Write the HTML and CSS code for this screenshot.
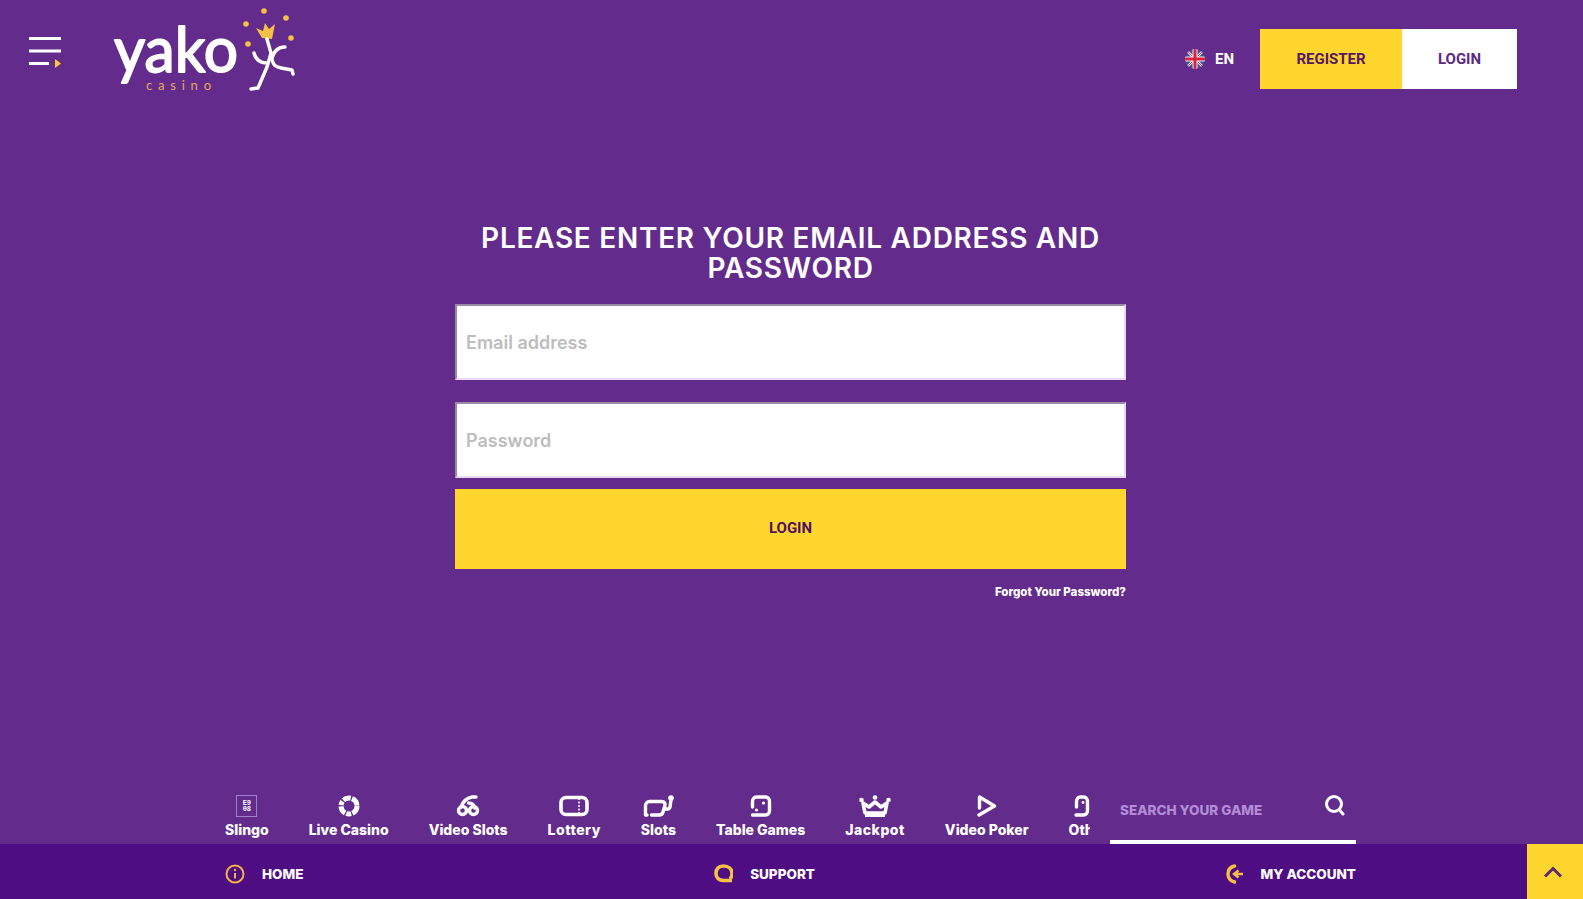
FILE: index.html
```html
<!DOCTYPE html>
<html lang="en">
<head>
<meta charset="utf-8">
<title>Yako Casino</title>
<link rel="stylesheet" href="styles.css">
</head>
<body>
<div class="page">
  <header class="header">
    <button class="burger" aria-label="Menu">
      <svg width="32" height="32" viewBox="0 0 32 32"><path d="M0 1.500h32M0 14h32M0 26.500h20" stroke="#fff" stroke-width="3" fill="none"/><path d="M26 22l6 4.500-6 4.500z" fill="#f7c93c"/></svg>
    </button>
    <a class="logo" href="#" aria-label="Yako Casino">
      <svg width="190" height="92" viewBox="110 5 190 92">
        <text class="logo-word" x="114" y="72" textLength="124" lengthAdjust="spacingAndGlyphs">yako</text>
        <text class="logo-sub" x="146" y="90" textLength="68">casino</text>
        <g fill="#f4c045">
          <circle cx="264" cy="11" r="2.800"/><circle cx="286" cy="18" r="2.800"/><circle cx="246" cy="24" r="2.800"/><circle cx="291" cy="38" r="2.800"/><circle cx="248" cy="44" r="2.800"/>
          <path d="M256 28l7 3 2-8 4 6 6-5-3 15-10-1z"/>
        </g>
        <path d="M267 39l4 14-4 14-9 21-7 1M254 53c2 8 8 10 13 10M285 47c-7 0-11 4-13 11 0 6 3 9 9 10l11 2 1 4" fill="none" stroke="#fff" stroke-width="3.400" stroke-linecap="round" stroke-linejoin="round"/>
      </svg>
    </a>
    <div class="account">
      <div class="lang">
        <svg class="flag" width="20" height="20" viewBox="0 0 20 20">
          <defs><clipPath id="flag-clip"><circle cx="10" cy="10" r="10"/></clipPath></defs>
          <g clip-path="url(#flag-clip)">
            <rect width="20" height="20" fill="#3f4f9e"/>
            <path d="M0 0l20 20M20 0L0 20" stroke="#d8d8e8" stroke-width="2.600"/>
            <path d="M0 0l20 20M20 0L0 20" stroke="#d9344a" stroke-width=".8"/>
            <path d="M10 0v20M0 10h20" stroke="#eee" stroke-width="5"/>
            <path d="M10 0v20M0 10h20" stroke="#d9233c" stroke-width="3"/>
          </g>
        </svg>
        <span>EN</span>
      </div>
      <a class="btn btn-register" href="#">REGISTER</a>
      <a class="btn btn-login" href="#">LOGIN</a>
    </div>
  </header>

  <main class="main">
    <form class="form">
      <h1 class="title">PLEASE ENTER YOUR EMAIL ADDRESS AND PASSWORD</h1>
      <input class="field" type="text" placeholder="Email address">
      <input class="field" type="password" placeholder="Password">
      <button class="submit" type="button">LOGIN</button>
      <a class="forgot" href="#">Forgot Your Password?</a>
    </form>
  </main>

  <div class="catbar">
    <nav class="cats">
      <a class="cat" href="#">
        <span class="slingo-icon"><span>E9</span><span>08</span></span>
        <span class="cat-label">Slingo</span>
      </a>
      <a class="cat" href="#">
        <svg class="cat-icon" width="24" height="22" viewBox="0 0 24 22"><circle cx="12" cy="11" r="8" fill="none" stroke="#fff" stroke-width="5" stroke-dasharray="9 1.300 5 1.300 8 1.300 4 1.300 8 1.300 9 1.300"/></svg>
        <span class="cat-label">Live Casino</span>
      </a>
      <a class="cat" href="#">
        <svg class="cat-icon" width="24" height="22" viewBox="0 0 24 22"><g fill="none" stroke="#fff" stroke-width="3.400" stroke-linecap="round"><circle cx="6.500" cy="15.500" r="4"/><circle cx="17.500" cy="15.500" r="4"/><path d="M5 12C7 6 11 3 16 2M12.500 8c3.500 0 5.500 2 6 5M16 2l4 0"/></g></svg>
        <span class="cat-label">Video Slots</span>
      </a>
      <a class="cat" href="#">
        <svg class="cat-icon" width="30" height="22" viewBox="0 0 30 22"><rect x="2" y="2.500" width="26" height="17" rx="5" fill="none" stroke="#fff" stroke-width="3.600"/><path d="M20 3v16" stroke="#fff" stroke-width="1.600" stroke-dasharray="2 1.500"/></svg>
        <span class="cat-label cat-label-loose">Lottery</span>
      </a>
      <a class="cat" href="#">
        <svg class="cat-icon" width="32" height="22" viewBox="0 0 32 22"><path d="M5 20H3.500V11c0-3 2-4.500 4-4.500h12c3 0 4 2 3.300 4.500l-1.800 6c-.5 2-2 3-4 3H9.500M23 14h3c1 0 1.500-.500 2-2l1-7" fill="none" stroke="#fff" stroke-width="3.400" stroke-linecap="round" stroke-linejoin="round"/><circle cx="29" cy="3" r="2.800" fill="#fff"/></svg>
        <span class="cat-label">Slots</span>
      </a>
      <a class="cat" href="#">
        <svg class="cat-icon" width="24" height="22" viewBox="0 0 24 22"><path d="M3.500 12V6.500c0-2.500 1.500-4.500 4-4.500h9c2.500 0 4 2 4 4.500v9c0 2.500-1.500 4.500-4 4.500H3.500" fill="none" stroke="#fff" stroke-width="3.400" stroke-linecap="round"/><circle cx="14.500" cy="8" r="1.600" fill="#fff"/><circle cx="7.500" cy="15" r="1.600" fill="#fff"/></svg>
        <span class="cat-label">Table Games</span>
      </a>
      <a class="cat" href="#">
        <svg class="cat-icon" width="32" height="22" viewBox="0 0 32 22"><path d="M4 8l2 10h20l2-10-6 4-6-5-6 5z" fill="none" stroke="#fff" stroke-width="3.600" stroke-linejoin="round"/><path d="M6 20.500h20" stroke="#fff" stroke-width="3"/><g fill="#fff"><circle cx="2.500" cy="5" r="2.300"/><circle cx="16" cy="2.500" r="2.300"/><circle cx="29.500" cy="5" r="2.300"/></g></svg>
        <span class="cat-label cat-label-loose">Jackpot</span>
      </a>
      <a class="cat" href="#">
        <svg class="cat-icon" width="22" height="22" viewBox="0 0 22 22"><path d="M3 20l15.500-9L3.500 2v11" fill="none" stroke="#fff" stroke-width="3.400" stroke-linecap="round" stroke-linejoin="round"/></svg>
        <span class="cat-label">Video Poker</span>
      </a>
      <a class="cat cat-other" href="#">
        <svg class="cat-icon" width="18" height="22" viewBox="0 0 18 22"><path d="M3.500 12V6.500c0-2.500 1.500-4.500 4-4.500h3c2.500 0 4 2 4 4.500v9c0 2.500-1.500 4.500-4 4.500H3" fill="none" stroke="#fff" stroke-width="3.400" stroke-linecap="round"/><circle cx="10" cy="7.500" r="1.400" fill="#fff"/></svg>
        <span class="cat-label">Other</span>
      </a>
    </nav>
    <div class="search">
      <input class="search-input" type="text" placeholder="SEARCH YOUR GAME">
      <svg class="search-icon" width="22" height="22" viewBox="0 0 22 22"><circle cx="10" cy="10" r="7.500" fill="none" stroke="#fff" stroke-width="3"/><path d="M15.500 16l3.500 4" stroke="#fff" stroke-width="3" stroke-linecap="round"/></svg>
    </div>
  </div>

  <footer class="botnav">
    <div class="botnav-links">
      <a class="botlink" href="#">
        <svg width="20" height="20" viewBox="0 0 20 20"><circle cx="10" cy="10" r="8.500" fill="none" stroke="#f4b24a" stroke-width="2"/><path d="M10 9v5.500" stroke="#f4b24a" stroke-width="2"/><circle cx="10" cy="6" r="1.200" fill="#f4b24a"/></svg>
        <span>HOME</span>
      </a>
      <a class="botlink" href="#">
        <svg width="19" height="20" viewBox="0 0 19 20"><path d="M16 15c1.500-1.500 2-3.500 2-5.500C18 5 14.500 2 9.500 2S2 5 2 9.500 5 16.500 9.500 16.500H18" fill="none" stroke="#f4c045" stroke-width="3.600" stroke-linejoin="round"/></svg>
        <span>SUPPORT</span>
      </a>
      <a class="botlink" href="#">
        <svg width="18" height="20" viewBox="0 0 18 20"><path d="M8.500 2C4.500 3 2 6 2 10s2.500 7 6.500 8" fill="none" stroke="#f4c045" stroke-width="3.400" stroke-linecap="round"/><path d="M17 10H9.500M12.500 6.500L8 10l4.500 3.500" fill="none" stroke="#f4c045" stroke-width="2.400"/></svg>
        <span>MY ACCOUNT</span>
      </a>
    </div>
    <button class="totop" aria-label="Back to top">
      <svg width="20" height="12" viewBox="0 0 20 12"><path d="M2 10.500l8-8 8 8" fill="none" stroke="#5c2a6e" stroke-width="3"/></svg>
    </button>
  </footer>
</div>
</body>
</html>
```

FILE: styles.css
```css
* { box-sizing: border-box; }
html, body { margin: 0; height: 100%; }
body {
  background: #632c8c;
  color: #fff;
  font-family: Inter, Roboto, "Liberation Sans", sans-serif;
  overflow: hidden;
}
a { color: inherit; text-decoration: none; }
button { font-family: inherit; border: 0; cursor: pointer; padding: 0; }

.page { height: 100vh; display: flex; flex-direction: column; }

.header {
  height: 118px;
  flex: none;
  display: flex;
  align-items: flex-start;
  padding-right: 66px;
}
.burger { background: none; margin: 37px 0 0 29px; width: 32px; height: 32px; display: block; }
.burger svg { display: block; }
.logo { margin: 5px 0 0 49px; display: block; }
.logo svg { display: block; }
.logo-word {
  font-family: Lato, sans-serif;
  font-size: 62px;
  font-weight: 400;
  fill: #fff;
  stroke: #fff;
  stroke-width: 1.800;
  stroke-linejoin: round;
}
.logo-sub {
  font-family: Lato, sans-serif;
  font-size: 13px;
  letter-spacing: 3px;
  fill: #e7a955;
}
.account { margin-left: auto; margin-top: 29px; display: flex; align-items: center; font-family: Roboto, sans-serif; }
.lang { display: flex; align-items: center; gap: 10px; margin-right: 26px; font-size: 15px; font-weight: 700; }
.flag { display: block; }
.btn {
  height: 60px;
  display: flex;
  align-items: center;
  justify-content: center;
  font-size: 15px;
  font-weight: 700;
}
.btn-register { width: 142px; background: #ffd62d; color: #55175f; }
.btn-login { width: 115px; background: #fff; color: #5c2a82; }

.main { flex: 1; min-height: 0; display: flex; justify-content: center; padding: 105px 2px 0 0; }
.form { width: 671px; display: flex; flex-direction: column; }
.title {
  margin: 0 0 21px;
  font-size: 28px;
  line-height: 30px;
  font-weight: 600;
  letter-spacing: .72px;
  text-align: center;
}
.field {
  height: 76px;
  flex: none;
  width: 100%;
  margin-bottom: 22px;
  padding: 0 9px;
  background: #fff;
  border: 2px solid;
  border-color: #9a8aa8 #ead9f5 #ead9f5 #9a8aa8;
  font-family: inherit;
  font-size: 18px;
  font-weight: 600;
  outline: none;
}
.field::placeholder { color: #bdbdbd; opacity: 1; }
.field + .field { margin-bottom: 11px; }
.submit {
  height: 80px;
  flex: none;
  padding-bottom: 2px;
  background: #ffd62d;
  color: #4f1160;
  font-family: Roboto, sans-serif;
  font-size: 15px;
  font-weight: 700;
}
.forgot { align-self: flex-end; margin-top: 16px; font-size: 11.5px; line-height: 14px; font-weight: 800; }

.catbar { flex: none; height: 58px; display: flex; padding-left: 225px; }
.cats { width: 865px; overflow: hidden; display: flex; gap: 40px; padding-top: 9px; flex: none; }
.cat { flex: none; display: flex; flex-direction: column; align-items: center; font-size: 14px; font-weight: 800; }
.cat-other { align-items: flex-start; }
.cat-other .cat-icon { margin-left: 4px; }
.cat-icon { display: block; height: 22px; }
.cat-label { display: block; margin-top: 4px; line-height: 18px; }
.cat-label-loose { letter-spacing: .5px; }
.slingo-icon {
  width: 21px;
  height: 22px;
  border: 1px solid #a27fc8;
  display: flex;
  flex-direction: column;
  align-items: center;
  justify-content: center;
  font-family: "Liberation Mono", monospace;
  font-size: 7px;
  line-height: 6px;
  font-weight: 700;
}
.search {
  width: 246px;
  margin-left: 20px;
  border-bottom: 4px solid #fff;
  display: flex;
  align-items: flex-start;
  padding: 12px 10px 0;
}
.search-input {
  flex: 1;
  min-width: 0;
  height: 24px;
  border: 0;
  padding: 0;
  background: none;
  color: #fff;
  font-family: inherit;
  font-size: 13.5px;
  font-weight: 800;
  outline: none;
}
.search-input::placeholder { color: #b28dd6; opacity: 1; }
.search-icon { flex: none; margin: -4px 0 0 0; display: block; }

.botnav { flex: none; height: 55px; background: #4f0d84; display: flex; padding-left: 225px; }
.botnav-links { width: 1131px; display: flex; justify-content: space-between; align-items: center; padding-top: 4px; }
.botlink { display: flex; align-items: center; gap: 17px; font-size: 13.5px; font-weight: 800; }
.botlink svg { display: block; }
.totop {
  margin-left: auto;
  width: 56px;
  padding: 1px 4px 0 0;
  background: #ffd62d;
  display: flex;
  align-items: center;
  justify-content: center;
}
.totop svg { display: block; }
```
